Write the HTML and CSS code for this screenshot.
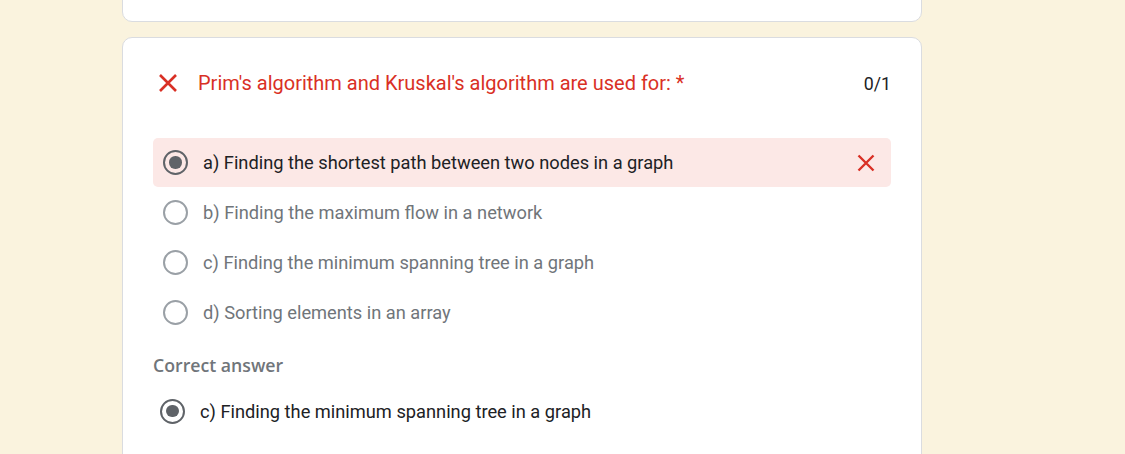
FILE: index.html
```html
<!DOCTYPE html>
<html>
<head>
<meta charset="utf-8">
<link rel="stylesheet" href="styles.css">
</head>
<body>
<div class="page">
  <div class="card card-prev"></div>
  <div class="card">
    <div class="q-head">
      <span class="q-icon">
        <svg width="20" height="20" viewBox="0 0 20 20"><path d="M2 2 L18 18 M18 2 L2 18" stroke="#d93025" stroke-width="2.6" fill="none"/></svg>
      </span>
      <span class="q-title">Prim's algorithm and Kruskal's algorithm are used for: *</span>
      <span class="q-score">0/1</span>
    </div>
    <div class="options">
      <div class="opt opt-wrong">
        <span class="radio radio-on"></span>
        <span class="opt-text opt-text-dark">a) Finding the shortest path between two nodes in a graph</span>
        <span class="opt-mark">
          <svg width="18" height="18" viewBox="0 0 18 18"><path d="M1.5 1.5 L16.5 16.5 M16.5 1.5 L1.5 16.5" stroke="#d93025" stroke-width="2.4" fill="none"/></svg>
        </span>
      </div>
      <div class="opt">
        <span class="radio"></span>
        <span class="opt-text">b) Finding the maximum flow in a network</span>
      </div>
      <div class="opt">
        <span class="radio"></span>
        <span class="opt-text">c) Finding the minimum spanning tree in a graph</span>
      </div>
      <div class="opt">
        <span class="radio"></span>
        <span class="opt-text">d) Sorting elements in an array</span>
      </div>
    </div>
    <div class="correct-label">Correct answer</div>
    <div class="opt opt-correct">
      <span class="radio radio-on"></span>
      <span class="opt-text opt-text-dark">c) Finding the minimum spanning tree in a graph</span>
    </div>
  </div>
</div>
</body>
</html>
```
FILE: styles.css
```css
html, body {
  margin: 0;
  padding: 0;
  background: #faf3de;
  overflow: hidden;
}
body {
  font-family: Roboto, "Liberation Sans", sans-serif;
  color: #202124;
}
.page {
  padding-left: 122px;
  display: flex;
  flex-direction: column;
  gap: 15px;
  margin-top: -40px;
}
.card {
  background: #fff;
  border: 1px solid #dadce0;
  border-radius: 10px;
  padding: 29px 30px 30px 30px;
  box-sizing: border-box;
  width: 800px;
}
.card-prev {
  height: 62px;
}
.q-head {
  display: flex;
  align-items: center;
  height: 32px;
}
.q-icon {
  width: 30px;
  height: 30px;
  display: flex;
  align-items: center;
  justify-content: center;
  margin-right: 15px;
}
.q-title {
  flex: 1;
  color: #d93025;
  font-size: 20px;
}
.q-score {
  font-size: 17.8px;
  color: #202124;
}
.options {
  margin-top: 39px;
  display: flex;
  flex-direction: column;
}
.opt {
  display: flex;
  align-items: center;
  height: 50px;
  padding: 0 10px;
  border-radius: 5px;
}
.opt-wrong {
  background: #fce8e6;
  height: 49px;
}
.radio {
  width: 25px;
  height: 25px;
  box-sizing: border-box;
  border: 2.5px solid #9aa0a6;
  border-radius: 50%;
  margin-right: 15px;
  flex: none;
  display: flex;
  align-items: center;
  justify-content: center;
}
.radio-on {
  border-color: #5f6368;
}
.radio-on::after {
  content: "";
  width: 12.5px;
  height: 12.5px;
  border-radius: 50%;
  background: #5f6368;
}
.opt-text {
  flex: 1;
  font-size: 18.25px;
  color: #70757a;
}
.opt-text-dark {
  color: #202124;
}
.opt-mark {
  width: 30px;
  height: 30px;
  display: flex;
  align-items: center;
  justify-content: center;
}
.correct-label {
  margin-top: 17px;
  font-family: "Open Sans", Roboto, sans-serif;
  font-weight: 600;
  font-size: 17.7px;
  color: #70757a;
  line-height: 22px;
}
.opt-correct {
  margin-top: 10px;
  padding-left: 7px;
}
```
